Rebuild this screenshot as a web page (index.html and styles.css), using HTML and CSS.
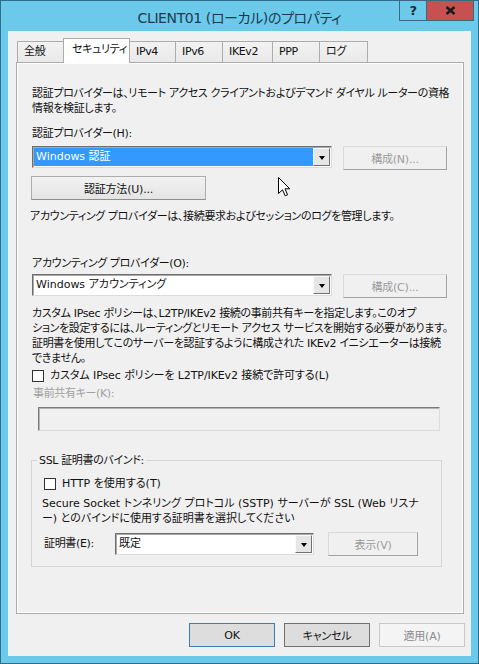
FILE: index.html
```html
<!DOCTYPE html>
<html lang="ja">
<head>
    <meta charset="UTF-8">
    <title>CLIENT01 (ローカル)のプロパティ</title>
    <link rel="stylesheet" href="styles.css">
</head>
<body>

    <div class="window">
        <div class="titlebar">
            <div class="title">CLIENT01 (ローカル)のプロパティ</div>
            <div class="caption-buttons">
                <span class="cap-btn help">?</span>
                <span class="cap-btn close">
                    <svg width="11" height="9" viewBox="0 0 11 9"><path d="M1.5 1 L9.5 8 M9.5 1 L1.5 8" stroke="#1a1a1a" stroke-width="2.4"/></svg>
                </span>
            </div>
        </div>

        <div class="client">
            <ul class="tabs">
                <li class="tab">全般</li>
                <li class="tab active">セキュリティ</li>
                <li class="tab">IPv4</li>
                <li class="tab">IPv6</li>
                <li class="tab">IKEv2</li>
                <li class="tab">PPP</li>
                <li class="tab">ログ</li>
            </ul>

            <div class="page">
                <p class="text intro">認証プロバイダーは、リモート アクセス クライアントおよびデマンド ダイヤル ルーターの資格<br>情報を検証します。</p>

                <div class="label auth-label">認証プロバイダー(H):</div>
                <div class="row auth-row">
                    <div class="combo combo-wide">
                        <span class="combo-value selected">Windows 認証</span>
                        <span class="combo-arrow"></span>
                    </div>
                    <button class="btn disabled btn-config">構成(N)...</button>
                </div>
                <button class="btn btn-method">認証方法(U)...</button>

                <p class="text acct-text">アカウンティング プロバイダーは、接続要求およびセッションのログを管理します。</p>

                <div class="label acct-label">アカウンティング プロバイダー(O):</div>
                <div class="row acct-row">
                    <div class="combo combo-wide">
                        <span class="combo-value">Windows アカウンティング</span>
                        <span class="combo-arrow"></span>
                    </div>
                    <button class="btn disabled btn-config">構成(C)...</button>
                </div>

                <p class="text ipsec-text">カスタム IPsec ポリシーは、L2TP/IKEv2 接続の事前共有キーを指定します。このオプ<br>ションを設定するには、ルーティングとリモート アクセス サービスを開始する必要があります。<br>証明書を使用してこのサーバーを認証するように構成された IKEv2 イニシエーターは接続<br>できません。</p>

                <label class="check ipsec-check"><span class="box"></span>カスタム IPsec ポリシーを L2TP/IKEv2 接続で許可する(L)</label>

                <div class="label disabled-text psk-label">事前共有キー(K):</div>
                <div class="textbox"></div>

                <div class="group">
                    <div class="group-title">SSL 証明書のバインド:</div>
                    <label class="check http-check"><span class="box"></span>HTTP を使用する(T)</label>
                    <p class="text sstp-text">Secure Socket トンネリング プロトコル (SSTP) サーバーが SSL (Web リスナ<br>ー) とのバインドに使用する証明書を選択してください</p>
                    <div class="row cert-row">
                        <span class="cert-label">証明書(E):</span>
                        <div class="combo combo-cert">
                            <span class="combo-value">既定</span>
                            <span class="combo-arrow"></span>
                        </div>
                        <button class="btn disabled btn-view">表示(V)</button>
                    </div>
                </div>
            </div>

            <div class="dialog-buttons">
                <button class="btn btn-dialog default">OK</button>
                <button class="btn btn-dialog cancel">キャンセル</button>
                <button class="btn btn-dialog disabled">適用(A)</button>
            </div>
        </div>

        <!-- mouse pointer -->
        <svg class="cursor" width="13" height="20" viewBox="0 0 13 20"><path d="M0.5 0.5 V16.5 L4.5 12.8 L7.2 18.8 L9.6 17.8 L7 11.8 H11.8 Z" fill="#fff" stroke="#000" stroke-width="1"/></svg>
    </div>

</body>
</html>
```

FILE: styles.css
```css
/* Basic Reset */
* {
    margin: 0;
    padding: 0;
    box-sizing: border-box;
}

body {
    font-family: "DejaVu Sans", "Noto Sans CJK JP", sans-serif;
    font-size: 11px;
    letter-spacing: -0.35px;
    font-feature-settings: "palt";
    color: #111;
    background-color: #6bc9ea;
}

/* Window frame */
.window {
    position: relative;
    width: 479px;
    height: 664px;
    border: 1px solid #2d6f8b;
    background-color: #6bc9ea;
    display: flex;
    flex-direction: column;
}

.titlebar {
    height: 30px;
    display: grid;
}

.title,
.caption-buttons {
    grid-area: 1 / 1;
}

.title {
    justify-self: center;
    align-self: center;
    font-size: 14px;
    letter-spacing: -0.4px;
    color: #1d3a4e;
    margin-top: 1px;
}

.caption-buttons {
    justify-self: end;
    align-self: start;
    display: flex;
    margin-top: -1px;
    margin-right: 4px;
}

.cap-btn {
    height: 21px;
    display: flex;
    align-items: center;
    justify-content: center;
    border: 1px solid #3a6a80;
}

.cap-btn.help {
    width: 28px;
    font-weight: bold;
    font-size: 13px;
    color: #1a2a33;
}

.cap-btn.close {
    width: 48px;
    margin-left: -1px;
    background-color: #c75050;
}

/* Client area */
.client {
    flex: 1;
    margin: 0 7px 7px 7px;
    background-color: #f0f0f0;
    padding: 7px 7px 0 8px;
}

/* Tabs */
.tabs {
    list-style: none;
    display: flex;
    align-items: flex-end;
    height: 24px;
    margin-left: 1px;
}

.tab {
    height: 21px;
    line-height: 19px;
    padding-left: 6px;
    border: 1px solid #acacac;
    border-bottom: none;
    margin-left: -1px;
    background: linear-gradient(#f2f2f2, #e9e9e9);
}

.tab:nth-child(1) { width: 47px; margin-left: 0; }
.tab:nth-child(3) { width: 47px; }
.tab:nth-child(4) { width: 48px; }
.tab:nth-child(5) { width: 51px; }
.tab:nth-child(6) { width: 48px; }
.tab:nth-child(7) { width: 49px; }

.tab.active {
    position: relative;
    z-index: 1;
    width: 67px;
    height: 25px;
    line-height: 21px;
    margin-bottom: -1px;
    padding-left: 8px;
    background: #fff;
}

/* Tab page */
.page {
    height: 552px;
    border: 1px solid #acacac;
    box-shadow: inset 0 0 0 1px #fdfdfd;
    padding: 23px 15px 0 15px;
}

.text {
    line-height: 15px;
    white-space: nowrap;
}

.label {
    line-height: 15px;
}

.disabled-text {
    color: #a0a0a0;
}

.auth-label { margin-top: 10px; }
.auth-row { margin-top: 5px; }
.btn-method { margin-top: 6px; margin-left: -1px; width: 175px; }
.acct-text { margin-top: 9px; margin-left: -2px; }
.acct-label { margin-top: 32px; }
.acct-row { margin-top: 3px; }
.ipsec-text { margin-top: 8px; }
.ipsec-check { margin-top: 2px; letter-spacing: -0.1px; }
.psk-label { margin-top: 3px; margin-left: 1px; }

.row {
    display: flex;
    align-items: flex-start;
}

/* Combo boxes */
.combo {
    display: flex;
    height: 22px;
    padding: 1px;
    background-color: #fff;
    border: 1px solid;
    border-color: #6e6e6e #dcdcdc #dcdcdc #6e6e6e;
    box-shadow: inset 1px 1px 0 #a9a9a9;
}

.combo-wide {
    width: 300px;
}

.combo-cert {
    width: 199px;
}

.combo-value {
    flex: 1;
    line-height: 18px;
    padding-left: 2px;
    letter-spacing: 0;
}

.combo-value.selected {
    background-color: #3399ff;
    color: #fff;
}

.combo-arrow {
    width: 17px;
    height: 18px;
    border: 1px solid;
    border-color: #fafafa #707070 #707070 #fafafa;
    background-color: #e6e6e6;
    display: flex;
    align-items: center;
    justify-content: center;
}

.combo-arrow::after {
    content: "";
    width: 0;
    height: 0;
    margin-top: 2px;
    border-left: 3.5px solid transparent;
    border-right: 3.5px solid transparent;
    border-top: 4px solid #000;
}

/* Buttons */
.btn {
    display: block;
    height: 24px;
    font-family: inherit;
    font-size: 11px;
    letter-spacing: -0.2px;
    font-feature-settings: "palt";
    color: #111;
    border: 1px solid #acacac;
    border-bottom-color: #8f8f8f;
    background: linear-gradient(#f2f2f2, #e4e4e4);
}

.btn.disabled {
    color: #9b9b9b;
    background: #f0f0f0;
    border-color: #dadada #a3a3a3 #a3a3a3 #dadada;
}

.btn-config {
    width: 104px;
    height: 24px;
    margin-left: 11px;
}

.btn-view {
    width: 90px;
    margin-left: 14px;
    margin-top: -1px;
}

/* Checkboxes */
.check {
    display: flex;
    align-items: center;
    line-height: 15px;
}

.box {
    width: 12px;
    height: 12px;
    margin-right: 6px;
    background-color: #fff;
    border: 1px solid #333;
}

/* Disabled text box */
.textbox {
    width: 402px;
    height: 24px;
    margin-top: 6px;
    margin-left: 6px;
    background-color: #f0f0f0;
    border: 1px solid;
    border-color: #7a7a7a #dcdcdc #dcdcdc #7a7a7a;
    box-shadow: inset 1px 1px 0 #b4b4b4;
}

/* Group box */
.group {
    width: 411px;
    margin-top: 29px;
    margin-left: -1px;
    border: 1px solid #d5d5d5;
    padding: 0 10px 10px 10px;
}

.group-title {
    width: fit-content;
    line-height: 15px;
    margin-top: -8px;
    margin-left: -5px;
    padding: 0 2px;
    background-color: #f0f0f0;
}

.http-check { margin-top: 8px; margin-left: 2px; letter-spacing: 0; }
.sstp-text { margin-top: 5px; letter-spacing: 0; }
.cert-row { margin-top: 7px; }

.cert-label {
    width: 71px;
    margin-left: 2px;
    line-height: 22px;
}

/* Dialog buttons */
.dialog-buttons {
    display: flex;
    justify-content: flex-end;
    gap: 9px;
    margin-top: 9px;
    margin-right: -1px;
}

.btn-dialog {
    width: 86px;
}

.btn-dialog.default {
    border-color: #3c7fb1;
    background: #dddddd;
}

.btn-dialog.cancel {
    border-color: #707070;
    background: #dddddd;
}

.btn-dialog.disabled {
    color: #8b8b8b;
    background: #f4f4f4;
    border-color: #c8c8c8;
}

/* Pointer over the dialog */
.cursor {
    position: absolute;
    left: 277px;
    top: 176px;
}
```
